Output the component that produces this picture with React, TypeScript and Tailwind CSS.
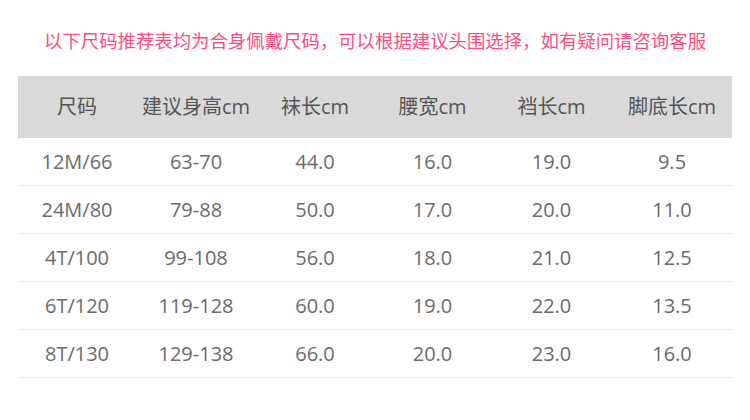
const headers = ["尺码", "建议身高cm", "袜长cm", "腰宽cm", "裆长cm", "脚底长cm"];

const rows = [
  ["12M/66", "63-70", "44.0", "16.0", "19.0", "9.5"],
  ["24M/80", "79-88", "50.0", "17.0", "20.0", "11.0"],
  ["4T/100", "99-108", "56.0", "18.0", "21.0", "12.5"],
  ["6T/120", "119-128", "60.0", "19.0", "22.0", "13.5"],
  ["8T/130", "129-138", "66.0", "20.0", "23.0", "16.0"],
];

export default function App() {
  return (
    <div
      className="w-[750px] h-[420px] bg-white overflow-hidden"
      style={{ fontFamily: '"Open Sans", "Noto Sans CJK SC", sans-serif' }}
    >
      <p className="pt-[27px] text-center text-[18.4px] leading-[28px] text-[#ff4d7f]">
        以下尺码推荐表均为合身佩戴尺码，可以根据建议头围选择，如有疑问请咨询客服
      </p>

      <div className="mt-[21px] ml-[18px] w-[714px]">
        <div className="grid grid-cols-[118px_120px_118px_117px_121px_120px] h-[62px] items-center bg-[#d9d9d9] text-[20px] text-[#555]">
          {headers.map((h) => (
            <div key={h} className="text-center">
              {h}
            </div>
          ))}
        </div>
        {rows.map((r) => (
          <div
            key={r[0]}
            className="grid grid-cols-[118px_120px_118px_117px_121px_120px] h-[48px] items-center border-b border-[#ececec] text-[20px] text-[#6b6b6b]"
          >
            {r.map((c, i) => (
              <div key={i} className="text-center">
                {c}
              </div>
            ))}
          </div>
        ))}
      </div>
    </div>
  );
}
